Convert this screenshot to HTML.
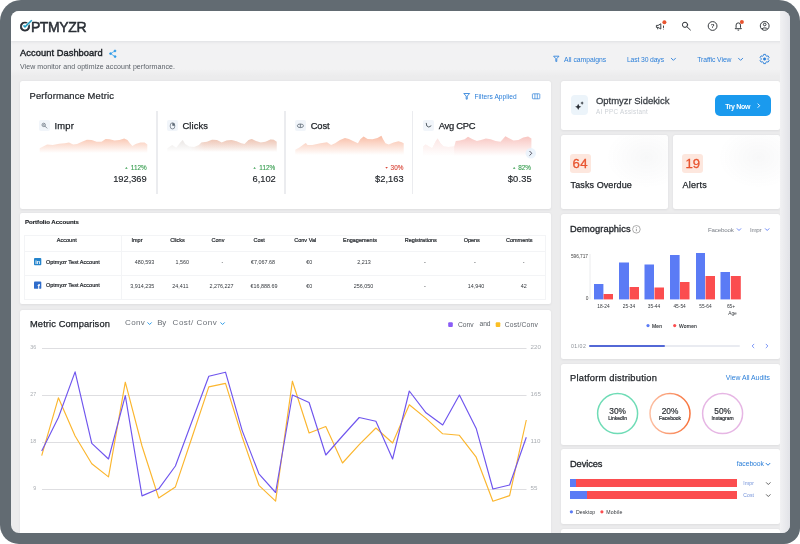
<!DOCTYPE html>
<html lang="en"><head><meta charset="utf-8"><title>Optmyzr Account Dashboard</title>
<style>
html,body{margin:0;padding:0;background:#fff;}
body{width:800px;height:544px;overflow:hidden;position:relative;font-family:"Liberation Sans",sans-serif;}
.frame{position:absolute;left:0;top:0;width:800px;height:544px;background:#626b72;border-radius:21px 21px 16px 19px;}
.screen{position:absolute;left:11px;top:10.5px;width:778.5px;height:522.5px;background:#ececed;border-radius:8px;overflow:hidden;}
.pg{position:absolute;left:-11px;top:-10.5px;width:800px;height:544px;filter:blur(0.4px);}
.c{position:absolute;background:#fff;border-radius:2.5px;box-shadow:0 0.5px 2.5px rgba(40,40,50,0.07);}
.b{position:absolute;}
.t{position:absolute;white-space:nowrap;line-height:1;}
svg{position:absolute;left:0;top:0;overflow:visible;}
</style></head><body>
<div class="frame"></div>
<div class="screen"><div class="pg">
<div class="b" style="left:11px;top:41px;width:778.5px;height:35px;background:linear-gradient(180deg,#f2f2f3 0%,#f2f2f3 80%,#ececed 100%);"></div>
<div class="b" style="left:11px;top:10.5px;width:778.5px;height:30.5px;background:#fff;box-shadow:0 1px 3px rgba(60,70,90,0.10);"></div>
<div class="c" style="left:20px;top:81px;width:531px;height:128px;"></div>
<div class="c" style="left:20px;top:213px;width:531px;height:91px;border-radius:2px;"></div>
<div class="c" style="left:20px;top:309.5px;width:531px;height:235.5px;"></div>
<div class="c" style="left:561px;top:81px;width:219px;height:49px;"></div>
<div class="c" style="left:561px;top:134.5px;width:106.5px;height:74.5px;background:radial-gradient(ellipse 38% 42% at 80% 30%,rgba(40,50,70,0.035),rgba(40,50,70,0) 100%),#fff;"></div>
<div class="c" style="left:673px;top:134.5px;width:107px;height:74.5px;background:radial-gradient(ellipse 38% 42% at 80% 30%,rgba(40,50,70,0.035),rgba(40,50,70,0) 100%),#fff;"></div>
<div class="c" style="left:561px;top:213.5px;width:219px;height:145.5px;"></div>
<div class="c" style="left:561px;top:364px;width:219px;height:80.5px;"></div>
<div class="c" style="left:561px;top:449px;width:219px;height:75px;"></div>
<div class="c" style="left:561px;top:528.5px;width:219px;height:16.5px;"></div>
<div class="b" style="left:780px;top:10.5px;width:9.5px;height:522.5px;background:linear-gradient(90deg,#f1f1f3,#e2e3e8);"></div>
<div class="b" style="left:156.4px;top:111px;width:1.2px;height:83px;background:#ebecef;"></div>
<div class="b" style="left:284.4px;top:111px;width:1.2px;height:83px;background:#ebecef;"></div>
<div class="b" style="left:411.9px;top:111px;width:1.2px;height:83px;background:#ebecef;"></div>
<div class="b" style="left:38.5px;top:119.6px;width:11.8px;height:11.0px;background:#f1f5fa;border-radius:2px;"></div>
<div class="b" style="left:166.5px;top:119.6px;width:11.8px;height:11.0px;background:#f1f5fa;border-radius:2px;"></div>
<div class="b" style="left:294.5px;top:119.6px;width:11.8px;height:11.0px;background:#f1f5fa;border-radius:2px;"></div>
<div class="b" style="left:422.5px;top:119.6px;width:11.8px;height:11.0px;background:#f1f5fa;border-radius:2px;"></div>
<div class="b" style="left:570.6px;top:94.8px;width:17.6px;height:20.4px;background:#ecf4fa;border-radius:4px;"></div>
<div class="b" style="left:715.1px;top:95.2px;width:55.5px;height:20.7px;background:#1a9aee;border-radius:5px;"></div>
<div class="b" style="left:570px;top:153.6px;width:20.6px;height:19.4px;background:#fde7de;border-radius:3px;"></div>
<div class="b" style="left:682.4px;top:153.6px;width:20.6px;height:19.4px;background:#fde7de;border-radius:3px;"></div>
<div class="b" style="left:24px;top:234.5px;width:522px;height:0.8px;background:#f3f4f6;"></div>
<div class="b" style="left:24px;top:250.5px;width:522px;height:0.8px;background:#f3f4f6;"></div>
<div class="b" style="left:24px;top:274.6px;width:522px;height:0.8px;background:#f3f4f6;"></div>
<div class="b" style="left:24px;top:298.9px;width:522px;height:0.8px;background:#f3f4f6;"></div>
<div class="b" style="left:24px;top:234.5px;width:0.8px;height:65.2px;background:#f3f4f6;"></div>
<div class="b" style="left:545.2px;top:234.5px;width:0.8px;height:65.2px;background:#f3f4f6;"></div>
<div class="b" style="left:121px;top:234.5px;width:0.8px;height:65.2px;background:#f3f4f6;"></div>
<div class="b" style="left:570px;top:479.2px;width:166.7px;height:8.1px;background:#fb4d4f;"></div>
<div class="b" style="left:570px;top:479.2px;width:6px;height:8.1px;background:#5b7bf5;"></div>
<div class="b" style="left:570px;top:491.3px;width:166.7px;height:7.9px;background:#fb4d4f;"></div>
<div class="b" style="left:570px;top:491.3px;width:16.6px;height:7.9px;background:#5b7bf5;"></div>
<div class="b" style="left:589px;top:345.4px;width:151px;height:1.2px;background:#e9ebf1;border-radius:1px;"></div>
<div class="b" style="left:589px;top:345.3px;width:75.6px;height:1.4px;background:#5368d6;border-radius:1px;"></div>
<svg width="800" height="544" viewBox="0 0 800 544">
<defs>
<linearGradient id="g1" gradientUnits="userSpaceOnUse" x1="0" y1="137" x2="0" y2="153"><stop offset="0" stop-color="#f7a888" stop-opacity="0.7"/><stop offset="1" stop-color="#f7a888" stop-opacity="0"/></linearGradient>
<linearGradient id="g2" gradientUnits="userSpaceOnUse" x1="0" y1="138" x2="0" y2="152"><stop offset="0" stop-color="#f7a888" stop-opacity="0.55"/><stop offset="1" stop-color="#f7a888" stop-opacity="0"/></linearGradient>
<linearGradient id="g2b" gradientUnits="userSpaceOnUse" x1="0" y1="138" x2="0" y2="152"><stop offset="0" stop-color="#dcd6d3" stop-opacity="0.7"/><stop offset="1" stop-color="#dcd6d3" stop-opacity="0"/></linearGradient>
<linearGradient id="g3" gradientUnits="userSpaceOnUse" x1="0" y1="134" x2="0" y2="155"><stop offset="0" stop-color="#f7a383" stop-opacity="0.8"/><stop offset="1" stop-color="#f7a383" stop-opacity="0"/></linearGradient>
<linearGradient id="g4" gradientUnits="userSpaceOnUse" x1="0" y1="134" x2="0" y2="156"><stop offset="0" stop-color="#f5a9a2" stop-opacity="0.75"/><stop offset="1" stop-color="#f5a9a2" stop-opacity="0"/></linearGradient>
<linearGradient id="gh2" gradientUnits="userSpaceOnUse" x1="167" y1="0" x2="277" y2="0"><stop offset="0" stop-color="#fff" stop-opacity="1"/><stop offset="0.28" stop-color="#fff" stop-opacity="1"/><stop offset="0.34" stop-color="#fff" stop-opacity="0"/></linearGradient>
<linearGradient id="gh4" gradientUnits="userSpaceOnUse" x1="423" y1="0" x2="532" y2="0"><stop offset="0" stop-color="#fff" stop-opacity="0.55"/><stop offset="0.28" stop-color="#fff" stop-opacity="0.5"/><stop offset="0.32" stop-color="#fff" stop-opacity="0"/></linearGradient>
<linearGradient id="gorange" x1="0" y1="0" x2="1" y2="0"><stop offset="0" stop-color="#fcc0a4"/><stop offset="1" stop-color="#f8733c"/></linearGradient>
<linearGradient id="gm2" gradientUnits="userSpaceOnUse" x1="190" y1="0" x2="204" y2="0"><stop offset="0" stop-color="#fff" stop-opacity="0"/><stop offset="1" stop-color="#fff" stop-opacity="1"/></linearGradient><mask id="m2" maskUnits="userSpaceOnUse" x="160" y="130" width="130" height="30"><rect x="160" y="130" width="130" height="30" fill="url(#gm2)"/></mask>
</defs>
<path d="M39.7 153.0 L39.7 148.2 L47.1 144.4 L52.7 144.9 L59.2 143.8 L64.9 143.3 L69.0 142.5 L73.1 144.4 L77.1 144.1 L82.0 141.7 L86.9 139.7 L91.7 140.1 L96.6 141.7 L101.5 141.7 L105.6 138.9 L109.6 139.2 L114.5 140.5 L119.4 140.1 L124.2 138.4 L127.5 140.1 L129.9 143.3 L132.4 146.1 L135.6 144.1 L140.5 142.5 L144.6 142.5 L147.3 144.4 L147.3 153.0 Z" fill="url(#g1)"/>
<path d="M167.3 152.0 L167.3 148.2 L172.2 144.9 L176.2 147.7 L180.3 142.5 L182.7 140.1 L185.2 144.1 L189.2 146.6 L194.1 147.0 L199.0 144.9 L201.4 142.5 L207.1 141.7 L212.0 139.7 L216.9 140.1 L221.7 142.5 L226.6 140.5 L231.5 140.1 L236.4 141.2 L241.2 143.3 L244.5 144.1 L248.6 140.1 L251.8 138.9 L255.9 140.9 L260.7 142.5 L265.6 141.7 L270.5 139.6 L273.7 139.7 L276.7 141.7 L276.7 152.0 Z" fill="url(#g2b)"/>
<g mask="url(#m2)"><path d="M167.3 152.0 L167.3 148.2 L172.2 144.9 L176.2 147.7 L180.3 142.5 L182.7 140.1 L185.2 144.1 L189.2 146.6 L194.1 147.0 L199.0 144.9 L201.4 142.5 L207.1 141.7 L212.0 139.7 L216.9 140.1 L221.7 142.5 L226.6 140.5 L231.5 140.1 L236.4 141.2 L241.2 143.3 L244.5 144.1 L248.6 140.1 L251.8 138.9 L255.9 140.9 L260.7 142.5 L265.6 141.7 L270.5 139.6 L273.7 139.7 L276.7 141.7 L276.7 152.0 Z" fill="url(#g2)"/>
</g>
<path d="M295.3 155.0 L295.3 149.8 L299.4 147.4 L304.2 144.1 L305.9 143.0 L307.5 144.9 L312.4 144.9 L320.5 143.3 L327.0 142.2 L331.1 144.9 L335.1 143.3 L340.0 140.1 L344.9 137.9 L348.9 138.9 L353.0 140.9 L357.9 143.3 L360.3 139.2 L363.6 136.5 L367.6 138.9 L372.5 139.2 L377.4 137.9 L381.4 135.7 L383.1 139.2 L385.5 143.3 L388.7 144.4 L393.6 142.5 L398.5 141.2 L401.7 142.2 L403.7 143.3 L403.7 155.0 Z" fill="url(#g3)"/>
<path d="M423.3 156.0 L423.3 146.6 L425.7 144.4 L429.0 146.6 L432.2 148.2 L435.5 141.7 L437.6 138.4 L440.4 143.3 L443.6 146.6 L448.5 147.0 L454.2 146.6 L455.8 140.9 L459.9 140.5 L464.7 139.2 L468.0 136.8 L472.1 138.9 L476.9 140.9 L481.0 140.1 L485.9 138.4 L490.7 139.2 L495.6 140.9 L500.5 141.7 L505.4 136.3 L508.6 137.9 L513.5 140.5 L518.4 140.1 L523.2 137.6 L528.1 136.5 L531.4 138.4 L531.4 156.0 Z" fill="url(#g4)"/>
<path d="M423.3 156.0 L423.3 146.6 L425.7 144.4 L429.0 146.6 L432.2 148.2 L435.5 141.7 L437.6 138.4 L440.4 143.3 L443.6 146.6 L448.5 147.0 L454.2 146.6 L454.2 156.0 Z" fill="url(#gh4)"/>
<line x1="42" x2="526.5" y1="348.5" y2="348.5" stroke="#dedee1" stroke-width="1.2"/>
<line x1="42" x2="526.5" y1="395.5" y2="395.5" stroke="#dedee1" stroke-width="1.2"/>
<line x1="42" x2="526.5" y1="442.5" y2="442.5" stroke="#dedee1" stroke-width="1.2"/>
<line x1="42" x2="526.5" y1="489.5" y2="489.5" stroke="#dedee1" stroke-width="1.2"/>
<polyline fill="none" stroke="#fbb62e" stroke-width="1.15" stroke-linejoin="round" points="41.7,455.6 58.4,397.8 75.1,436.0 91.8,463.8 108.5,476.9 125.3,382.2 142.0,446.0 158.7,498.0 175.4,486.9 192.1,437.0 208.8,386.9 225.5,383.4 242.2,437.0 258.9,485.3 275.6,501.2 292.4,381.2 309.1,433.0 325.8,426.5 342.5,463.0 359.2,444.7 375.9,428.0 392.6,443.0 409.3,404.7 426.0,418.4 442.7,433.8 459.4,435.3 476.2,457.2 492.9,501.2 509.6,495.6 526.3,420.0"/>
<polyline fill="none" stroke="#6f55ee" stroke-width="1.15" stroke-linejoin="round" points="41.7,450.9 58.4,417.5 75.1,371.9 91.8,443.4 108.5,459.0 125.3,395.6 142.0,495.9 158.7,488.8 175.4,466.0 192.1,421.0 208.8,376.2 225.5,372.2 242.2,430.6 258.9,473.8 275.6,492.5 292.4,395.0 309.1,402.5 325.8,455.0 342.5,436.0 359.2,417.5 375.9,421.2 392.6,459.0 409.3,391.0 426.0,412.8 442.7,425.0 459.4,395.0 476.2,428.4 492.9,489.0 509.6,485.0 526.3,437.2"/>
<rect x="448.2" y="322.3" width="4.6" height="4.6" rx="1" fill="#8a5cf6"/>
<rect x="495.7" y="322.3" width="4.6" height="4.6" rx="1" fill="#fbbf24"/>
<line x1="590" x2="590" y1="254" y2="299.4" stroke="#e6e7ea" stroke-width="0.8"/>
<rect x="594" y="284" width="9.4" height="15.4" fill="#5b7bf5"/>
<rect x="603.6" y="294" width="9.4" height="5.4" fill="#fb4d4f"/>
<rect x="619" y="262.5" width="10" height="36.9" fill="#5b7bf5"/>
<rect x="629.6" y="287" width="9.4" height="12.4" fill="#fb4d4f"/>
<rect x="644.5" y="264.5" width="9.5" height="34.9" fill="#5b7bf5"/>
<rect x="654.5" y="287.5" width="9.5" height="11.9" fill="#fb4d4f"/>
<rect x="670" y="255" width="9.6" height="44.4" fill="#5b7bf5"/>
<rect x="680" y="282" width="9.5" height="17.4" fill="#fb4d4f"/>
<rect x="696" y="253" width="9" height="46.4" fill="#5b7bf5"/>
<rect x="705.5" y="276" width="9.5" height="23.4" fill="#fb4d4f"/>
<rect x="720.5" y="272" width="9.5" height="27.4" fill="#5b7bf5"/>
<rect x="730.8" y="276" width="10.0" height="23.4" fill="#fb4d4f"/>
<circle cx="648" cy="325.6" r="1.6" fill="#5b7bf5"/><circle cx="674.7" cy="325.6" r="1.6" fill="#fb4d4f"/>
<circle cx="571.4" cy="511.8" r="1.6" fill="#5b7bf5"/><circle cx="601.9" cy="511.8" r="1.6" fill="#fb4d4f"/>
<circle cx="617.6" cy="413.6" r="20" fill="none" stroke="#6fdcb6" stroke-width="1.5"/>
<circle cx="670" cy="413.6" r="20" fill="none" stroke="url(#gorange)" stroke-width="1.5"/>
<circle cx="722.6" cy="413.6" r="20" fill="none" stroke="#e6b6e4" stroke-width="1.5"/>
<path d="M671.30 58.25 L673.40 60.35 L675.50 58.25" fill="none" stroke="#2b7fd9" stroke-width="0.9" stroke-linecap="round" stroke-linejoin="round"/>
<path d="M738.50 58.25 L740.60 60.35 L742.70 58.25" fill="none" stroke="#2b7fd9" stroke-width="0.9" stroke-linecap="round" stroke-linejoin="round"/>
<path d="M147.80 322.70 L149.60 324.50 L151.40 322.70" fill="none" stroke="#2b9be8" stroke-width="1" stroke-linecap="round" stroke-linejoin="round"/>
<path d="M220.80 322.70 L222.60 324.50 L224.40 322.70" fill="none" stroke="#2b9be8" stroke-width="1" stroke-linecap="round" stroke-linejoin="round"/>
<path d="M737.20 228.70 L739.00 230.50 L740.80 228.70" fill="none" stroke="#5b7bf5" stroke-width="0.9" stroke-linecap="round" stroke-linejoin="round"/>
<path d="M765.40 228.70 L767.20 230.50 L769.00 228.70" fill="none" stroke="#5b7bf5" stroke-width="0.9" stroke-linecap="round" stroke-linejoin="round"/>
<path d="M766.10 463.35 L768.00 465.25 L769.90 463.35" fill="none" stroke="#2b7fd9" stroke-width="1" stroke-linecap="round" stroke-linejoin="round"/>
<path d="M766.40 482.65 L768.30 484.55 L770.20 482.65" fill="none" stroke="#555" stroke-width="0.9" stroke-linecap="round" stroke-linejoin="round"/>
<path d="M766.40 494.65 L768.30 496.55 L770.20 494.65" fill="none" stroke="#555" stroke-width="0.9" stroke-linecap="round" stroke-linejoin="round"/>
<path d="M753.90 344.20 L752.10 346.00 L753.90 347.80" fill="none" stroke="#5b7bf5" stroke-width="0.8" stroke-linecap="round" stroke-linejoin="round"/>
<path d="M766.10 344.20 L767.90 346.00 L766.10 347.80" fill="none" stroke="#5b7bf5" stroke-width="0.8" stroke-linecap="round" stroke-linejoin="round"/>
<path d="M757.90 103.90 L759.70 105.70 L757.90 107.50" fill="none" stroke="#fff" stroke-width="0.9" stroke-linecap="round" stroke-linejoin="round"/>
<circle cx="530.8" cy="153.3" r="5.2" fill="#e9f2fb" opacity="0.85"/>
<path d="M529.80 151.30 L531.80 153.30 L529.80 155.30" fill="none" stroke="#445" stroke-width="0.9" stroke-linecap="round" stroke-linejoin="round"/>
<g fill="#2b9be8" stroke="#2b9be8" stroke-width="0.7"><circle cx="115" cy="50.9" r="0.95"/><circle cx="110.5" cy="53.6" r="0.95"/><circle cx="115.1" cy="56.6" r="0.95"/><path d="M115 50.9 L110.5 53.6 L115.1 56.6" fill="none"/></g>
<g stroke="#2d3136" stroke-width="0.9" fill="none" stroke-linejoin="round"><path d="M656.4 25.4 h1.7 l2.7 -1.6 v5.2 l-2.7 -1.6 h-1.7 z"/><path d="M657.7 27.6 v1.7"/><path d="M663.5 25.6 v2.3 M663.5 28.8 v0.6"/></g><circle cx="664.4" cy="22.2" r="2" fill="#e8542f"/>
<g stroke="#2d3136" stroke-width="1" fill="none" stroke-linecap="round"><circle cx="685" cy="24.8" r="2.6"/><path d="M687 26.8 L690.4 30"/></g>
<circle cx="712.6" cy="26" r="4.4" fill="none" stroke="#2d3136" stroke-width="0.95"/><text x="712.6" y="28.2" font-size="6.2" font-weight="700" text-anchor="middle" fill="#2d3136" font-family="Liberation Sans, sans-serif">?</text>
<g stroke="#2d3136" stroke-width="0.95" fill="none" stroke-linejoin="round"><path d="M735.2 28.7 h6.2 l-0.9 -1.2 v-2.4 a2.2 2.2 0 0 0 -4.4 0 v2.4 z"/><path d="M737.6 30.1 h1.5"/></g><circle cx="741.9" cy="22.1" r="2" fill="#e8542f"/>
<g stroke="#2d3136" stroke-width="0.95" fill="none"><circle cx="764.7" cy="25.9" r="4.4"/><circle cx="764.7" cy="24.5" r="1.3"/><path d="M761.9 29 a3.2 2.2 0 0 1 5.6 0"/></g>
<path d="M553.6 56.2 h5.4 l-2.21 2.43 v2.81 h-0.97 v-2.81 z" fill="none" stroke="#2b7fd9" stroke-width="0.85" stroke-linejoin="round"/>
<path d="M463.8 93.5 h5.8 l-2.38 2.61 v3.02 h-1.04 v-3.02 z" fill="none" stroke="#2b7fd9" stroke-width="0.85" stroke-linejoin="round"/>
<g fill="none" stroke="#2b7fd9" stroke-width="0.7"><rect x="532.4" y="93.8" width="7.4" height="5" rx="0.6"/><path d="M534.9 93.8 v5 M537.3 93.8 v5"/></g>
<path d="M765.95 62.20 L765.53 63.61 L763.67 63.61 L763.25 62.20 L762.50 61.77 L761.08 62.11 L760.14 60.49 L761.15 59.43 L761.15 58.57 L760.14 57.51 L761.08 55.89 L762.50 56.23 L763.25 55.80 L763.67 54.39 L765.53 54.39 L765.95 55.80 L766.70 56.23 L768.12 55.89 L769.06 57.51 L768.05 58.57 L768.05 59.43 L769.06 60.49 L768.12 62.11 L766.70 61.77 Z" fill="none" stroke="#2b7fd9" stroke-width="0.95" stroke-linejoin="round"/><circle cx="764.6" cy="59" r="1.27" fill="#2b7fd9" stroke="#2b7fd9" stroke-width="0.5"/>
<g stroke="#5d6975" stroke-width="0.7" fill="none"><circle cx="43.7" cy="124.9" r="1.7"/><path d="M45 126.2 L46.9 128.1" stroke-linecap="round"/><path d="M42.9 124.9 h1.6 M43.7 124.1 v1.6" stroke-width="0.45"/></g>
<g stroke="#5d6975" stroke-width="0.7" fill="none"><rect x="170.3" y="122.9" width="4.4" height="6" rx="2.1"/><path d="M172.5 122.9 v2.6 h2.2" stroke-width="0.5"/><path d="M172.6 123 a2.1 2.1 0 0 1 2.1 2.4 h-2.1 z" fill="#5d6975" stroke="none"/></g>
<g stroke="#5d6975" stroke-width="0.8" fill="none"><ellipse cx="300.4" cy="125.8" rx="3.1" ry="1.8"/><path d="M300.4 124 v3.6"/></g>
<g stroke="#3d4852" stroke-width="0.85" fill="none" stroke-linecap="round" stroke-linejoin="round"><path d="M426.3 123.3 L426.8 126 Q428.6 128.3 431 126"/></g>
<path d="M125.10000000000001 168.70000000000002 L126.4 166.9 L127.7 168.70000000000002 Z" fill="#3a9f52"/>
<path d="M253.29999999999998 168.70000000000002 L254.6 166.9 L255.9 168.70000000000002 Z" fill="#3a9f52"/>
<path d="M385.3 166.9 L386.6 168.70000000000002 L387.90000000000003 166.9 Z" fill="#d9483b"/>
<path d="M512.9000000000001 168.70000000000002 L514.2 166.9 L515.5 168.70000000000002 Z" fill="#3a9f52"/>
<path d="M578.2 103.7 Q578.634 106.366 581.3000000000001 106.8 Q578.634 107.234 578.2 109.89999999999999 Q577.7660000000001 107.234 575.1 106.8 Q577.7660000000001 106.366 578.2 103.7 Z" fill="#2a2f36"/>
<path d="M582.1 101.3 Q582.352 102.848 583.9 103.1 Q582.352 103.35199999999999 582.1 104.89999999999999 Q581.8480000000001 103.35199999999999 580.3000000000001 103.1 Q581.8480000000001 102.848 582.1 101.3 Z" fill="#2a2f36"/>
<circle cx="636.4" cy="229.3" r="3.8" fill="none" stroke="#777" stroke-width="0.6"/><path d="M636.4 228.8 v2.4 M636.4 227.2 v0.7" stroke="#777" stroke-width="0.7"/>
<rect x="34" y="258" width="7.3" height="7.2" rx="0.9" fill="#2584cc"/><text x="37.7" y="264" font-size="5.6" font-weight="700" text-anchor="middle" fill="#fff" font-family="Liberation Sans, sans-serif">in</text>
<rect x="34" y="281.6" width="7.3" height="7.2" rx="0.9" fill="#2f6ccb"/><text x="38.8" y="288.7" font-size="7.4" font-weight="700" text-anchor="middle" fill="#fff" font-family="Liberation Sans, sans-serif">f</text>
</svg>

<div class="t" style="left:19.75px;top:20.12px;font-size:13.5px;color:#2a2f36;-webkit-text-stroke:0.75px #2a2f36;">O</div>
<div class="t" style="left:30.90px;top:19.65px;font-size:14px;color:#2a2f36;letter-spacing:-0.375px;-webkit-text-stroke:0.5px #2a2f36;">PTMYZR</div>
<div class="t" style="left:20.00px;top:49.43px;font-size:9.3px;color:#1d2126;letter-spacing:0.062px;-webkit-text-stroke:0.4px #1d2126;">Account Dashboard</div>
<div class="t" style="left:20.00px;top:62.57px;font-size:7px;color:#5b6168;letter-spacing:0.074px;">View monitor and optimize account performance.</div>
<div class="t" style="left:564.00px;top:56.54px;font-size:6.8px;color:#2b7fd9;letter-spacing:-0.005px;">All campaigns</div>
<div class="t" style="left:626.90px;top:56.54px;font-size:6.8px;color:#2b7fd9;letter-spacing:-0.126px;">Last 30 days</div>
<div class="t" style="left:697.20px;top:56.54px;font-size:6.8px;color:#2b7fd9;letter-spacing:-0.062px;">Traffic View</div>
<div class="t" style="left:29.50px;top:90.79px;font-size:9.4px;color:#22262b;letter-spacing:0.154px;-webkit-text-stroke:0.2px #22262b;">Performance Metric</div>
<div class="t" style="left:474.50px;top:93.91px;font-size:6.6px;color:#2b7fd9;letter-spacing:0.061px;">Filters Applied</div>
<div class="t" style="left:54.50px;top:120.64px;font-size:9.4px;color:#1d2126;letter-spacing:0.214px;-webkit-text-stroke:0.25px #1d2126;">Impr</div>
<div class="t" style="left:182.50px;top:120.64px;font-size:9.4px;color:#1d2126;letter-spacing:0.091px;-webkit-text-stroke:0.25px #1d2126;">Clicks</div>
<div class="t" style="left:310.75px;top:120.64px;font-size:9.4px;color:#1d2126;letter-spacing:-0.152px;-webkit-text-stroke:0.25px #1d2126;">Cost</div>
<div class="t" style="left:438.75px;top:120.64px;font-size:9.4px;color:#1d2126;letter-spacing:-0.283px;-webkit-text-stroke:0.25px #1d2126;">Avg CPC</div>
<div class="t" style="left:130.82px;top:164.58px;font-size:6.4px;color:#3a9f52;-webkit-text-stroke:0.12px #3a9f52;">112%</div>
<div class="t" style="left:259.32px;top:164.58px;font-size:6.4px;color:#3a9f52;-webkit-text-stroke:0.12px #3a9f52;">112%</div>
<div class="t" style="left:390.60px;top:164.58px;font-size:6.4px;color:#d9483b;-webkit-text-stroke:0.12px #d9483b;">30%</div>
<div class="t" style="left:518.20px;top:164.58px;font-size:6.4px;color:#3a9f52;-webkit-text-stroke:0.12px #3a9f52;">82%</div>
<div class="t" style="left:113.20px;top:175.13px;font-size:9.3px;color:#22262b;letter-spacing:-0.017px;-webkit-text-stroke:0.15px #22262b;">192,369</div>
<div class="t" style="left:252.50px;top:175.13px;font-size:9.3px;color:#22262b;-webkit-text-stroke:0.15px #22262b;">6,102</div>
<div class="t" style="left:375.00px;top:175.13px;font-size:9.3px;color:#22262b;letter-spacing:0.048px;-webkit-text-stroke:0.15px #22262b;">$2,163</div>
<div class="t" style="left:507.80px;top:175.13px;font-size:9.3px;color:#22262b;letter-spacing:0.141px;-webkit-text-stroke:0.15px #22262b;">$0.35</div>
<div class="t" style="left:25.00px;top:219.14px;font-size:6.1px;color:#15181c;font-weight:700;letter-spacing:-0.016px;-webkit-text-stroke:0.12px #15181c;">Portfolio Accounts</div>
<div class="t" style="left:56.86px;top:238.04px;font-size:5.5px;color:#22262b;-webkit-text-stroke:0.2px #22262b;">Account</div>
<div class="t" style="left:131.50px;top:238.04px;font-size:5.5px;color:#22262b;-webkit-text-stroke:0.2px #22262b;">Impr</div>
<div class="t" style="left:170.16px;top:238.04px;font-size:5.5px;color:#22262b;-webkit-text-stroke:0.2px #22262b;">Clicks</div>
<div class="t" style="left:211.58px;top:238.04px;font-size:5.5px;color:#22262b;-webkit-text-stroke:0.2px #22262b;">Conv</div>
<div class="t" style="left:253.59px;top:238.04px;font-size:5.5px;color:#22262b;-webkit-text-stroke:0.2px #22262b;">Cost</div>
<div class="t" style="left:294.29px;top:238.04px;font-size:5.5px;color:#22262b;-webkit-text-stroke:0.2px #22262b;">Conv Val</div>
<div class="t" style="left:343.02px;top:238.04px;font-size:5.5px;color:#22262b;-webkit-text-stroke:0.2px #22262b;">Engagements</div>
<div class="t" style="left:404.70px;top:238.04px;font-size:5.5px;color:#22262b;-webkit-text-stroke:0.2px #22262b;">Registrations</div>
<div class="t" style="left:463.64px;top:238.04px;font-size:5.5px;color:#22262b;-webkit-text-stroke:0.2px #22262b;">Opens</div>
<div class="t" style="left:505.95px;top:238.04px;font-size:5.5px;color:#22262b;-webkit-text-stroke:0.2px #22262b;">Comments</div>
<div class="t" style="left:45.90px;top:260.24px;font-size:5.5px;color:#1d2126;letter-spacing:0.030px;-webkit-text-stroke:0.2px #1d2126;">Optmyzr Test Account</div>
<div class="t" style="left:45.90px;top:283.44px;font-size:5.5px;color:#1d2126;letter-spacing:0.030px;-webkit-text-stroke:0.2px #1d2126;">Optmyzr Test Account</div>
<div class="t" style="left:134.75px;top:260.23px;font-size:5.4px;color:#33373c;">480,593</div>
<div class="t" style="left:175.45px;top:260.23px;font-size:5.4px;color:#33373c;">1,560</div>
<div class="t" style="left:221.60px;top:260.23px;font-size:5.4px;color:#33373c;">-</div>
<div class="t" style="left:251.11px;top:260.23px;font-size:5.4px;color:#33373c;">€7,067.68</div>
<div class="t" style="left:306.20px;top:260.23px;font-size:5.4px;color:#33373c;">€0</div>
<div class="t" style="left:357.25px;top:260.23px;font-size:5.4px;color:#33373c;">2,213</div>
<div class="t" style="left:424.10px;top:260.23px;font-size:5.4px;color:#33373c;">-</div>
<div class="t" style="left:474.10px;top:260.23px;font-size:5.4px;color:#33373c;">-</div>
<div class="t" style="left:522.85px;top:260.23px;font-size:5.4px;color:#33373c;">-</div>
<div class="t" style="left:130.31px;top:284.23px;font-size:5.4px;color:#33373c;">3,914,235</div>
<div class="t" style="left:172.35px;top:284.23px;font-size:5.4px;color:#33373c;">24,411</div>
<div class="t" style="left:209.61px;top:284.23px;font-size:5.4px;color:#33373c;">2,276,227</div>
<div class="t" style="left:250.41px;top:284.23px;font-size:5.4px;color:#33373c;">€16,888.69</div>
<div class="t" style="left:306.20px;top:284.23px;font-size:5.4px;color:#33373c;">€0</div>
<div class="t" style="left:353.65px;top:284.23px;font-size:5.4px;color:#33373c;">256,050</div>
<div class="t" style="left:424.10px;top:284.23px;font-size:5.4px;color:#33373c;">-</div>
<div class="t" style="left:467.65px;top:284.23px;font-size:5.4px;color:#33373c;">14,940</div>
<div class="t" style="left:520.75px;top:284.23px;font-size:5.4px;color:#33373c;">42</div>
<div class="t" style="left:30.00px;top:319.53px;font-size:9.3px;color:#1d2126;letter-spacing:0.114px;-webkit-text-stroke:0.25px #1d2126;">Metric Comparison</div>
<div class="t" style="left:125.00px;top:319.23px;font-size:8px;color:#6a6f76;letter-spacing:0.375px;">Conv</div>
<div class="t" style="left:157.30px;top:319.23px;font-size:8px;color:#6a6f76;letter-spacing:-0.429px;">By</div>
<div class="t" style="left:172.60px;top:319.23px;font-size:8px;color:#6a6f76;letter-spacing:0.508px;">Cost/ Conv</div>
<div class="t" style="left:458.00px;top:321.93px;font-size:6.7px;color:#5a5f66;letter-spacing:-0.036px;">Conv</div>
<div class="t" style="left:479.60px;top:321.23px;font-size:6.7px;color:#5a5f66;letter-spacing:-0.149px;">and</div>
<div class="t" style="left:504.75px;top:321.93px;font-size:6.7px;color:#5a5f66;letter-spacing:0.237px;">Cost/Conv</div>
<div class="t" style="left:30.29px;top:344.91px;font-size:5.3px;color:#a9adb2;">36</div>
<div class="t" style="left:30.29px;top:391.91px;font-size:5.3px;color:#a9adb2;">27</div>
<div class="t" style="left:30.29px;top:438.91px;font-size:5.3px;color:#a9adb2;">18</div>
<div class="t" style="left:33.25px;top:485.91px;font-size:5.3px;color:#a9adb2;">9</div>
<div class="t" style="left:530.60px;top:343.85px;font-size:6.2px;color:#a9adb2;">220</div>
<div class="t" style="left:530.60px;top:390.85px;font-size:6.2px;color:#a9adb2;">165</div>
<div class="t" style="left:530.60px;top:437.85px;font-size:6.2px;color:#a9adb2;">110</div>
<div class="t" style="left:530.60px;top:484.85px;font-size:6.2px;color:#a9adb2;">55</div>
<div class="t" style="left:596.00px;top:96.26px;font-size:9.5px;color:#3c4147;letter-spacing:-0.033px;-webkit-text-stroke:0.28px #3c4147;">Optmyzr Sidekick</div>
<div class="t" style="left:596.00px;top:108.57px;font-size:6.3px;color:#cdd1d6;letter-spacing:0.283px;">AI PPC Assistant</div>
<div class="t" style="left:725.20px;top:102.77px;font-size:7px;color:#ffffff;font-weight:700;letter-spacing:-0.344px;">Try Now</div>
<div class="t" style="left:572.40px;top:156.93px;font-size:13.2px;color:#e8542f;letter-spacing:0.619px;-webkit-text-stroke:0.3px #e8542f;">64</div>
<div class="t" style="left:685.40px;top:156.93px;font-size:13.2px;color:#e8542f;letter-spacing:0.019px;-webkit-text-stroke:0.3px #e8542f;">19</div>
<div class="t" style="left:570.60px;top:180.58px;font-size:9px;color:#22262b;letter-spacing:0.093px;-webkit-text-stroke:0.25px #22262b;">Tasks Overdue</div>
<div class="t" style="left:682.40px;top:180.58px;font-size:9px;color:#22262b;letter-spacing:0.252px;-webkit-text-stroke:0.25px #22262b;">Alerts</div>
<div class="t" style="left:570.00px;top:224.63px;font-size:9.3px;color:#1d2126;letter-spacing:0.056px;-webkit-text-stroke:0.3px #1d2126;">Demographics</div>
<div class="t" style="left:708.00px;top:227.05px;font-size:6.2px;color:#7a7f87;letter-spacing:-0.185px;">Facebook</div>
<div class="t" style="left:750.00px;top:227.05px;font-size:6.2px;color:#7a7f87;letter-spacing:-0.279px;">Impr</div>
<div class="t" style="left:571.00px;top:254.54px;font-size:4.8px;color:#444;letter-spacing:-0.053px;">596,717</div>
<div class="t" style="left:585.83px;top:296.94px;font-size:4.8px;color:#444;">0</div>
<div class="t" style="left:597.36px;top:304.64px;font-size:4.8px;color:#33373c;">18-24</div>
<div class="t" style="left:622.86px;top:304.64px;font-size:4.8px;color:#33373c;">25-34</div>
<div class="t" style="left:647.86px;top:304.64px;font-size:4.8px;color:#33373c;">35-44</div>
<div class="t" style="left:673.46px;top:304.64px;font-size:4.8px;color:#33373c;">45-54</div>
<div class="t" style="left:699.36px;top:304.64px;font-size:4.8px;color:#33373c;">55-64</div>
<div class="t" style="left:726.93px;top:304.64px;font-size:4.8px;color:#33373c;">65+</div>
<div class="t" style="left:728.23px;top:311.74px;font-size:4.8px;color:#33373c;">Age</div>
<div class="t" style="left:652.00px;top:323.77px;font-size:5px;color:#2a2e33;letter-spacing:0.106px;-webkit-text-stroke:0.12px #2a2e33;">Men</div>
<div class="t" style="left:679.00px;top:323.77px;font-size:5px;color:#2a2e33;letter-spacing:0.191px;-webkit-text-stroke:0.12px #2a2e33;">Women</div>
<div class="t" style="left:571.00px;top:344.20px;font-size:5.2px;color:#8a8f96;letter-spacing:0.448px;">01/02</div>
<div class="t" style="left:570.00px;top:374.33px;font-size:9.3px;color:#1d2126;letter-spacing:0.236px;-webkit-text-stroke:0.25px #1d2126;">Platform distribution</div>
<div class="t" style="left:725.80px;top:375.14px;font-size:6.8px;color:#2b7fd9;letter-spacing:0.007px;">View All Audits</div>
<div class="t" style="left:609.30px;top:407.17px;font-size:8.3px;color:#2d3136;-webkit-text-stroke:0.2px #2d3136;">30%</div>
<div class="t" style="left:608.15px;top:415.97px;font-size:5.0px;color:#2d3136;-webkit-text-stroke:0.2px #2d3136;">LinkedIn</div>
<div class="t" style="left:661.70px;top:407.17px;font-size:8.3px;color:#2d3136;-webkit-text-stroke:0.2px #2d3136;">20%</div>
<div class="t" style="left:659.02px;top:415.97px;font-size:5.0px;color:#2d3136;-webkit-text-stroke:0.2px #2d3136;">Facebook</div>
<div class="t" style="left:714.30px;top:407.17px;font-size:8.3px;color:#2d3136;-webkit-text-stroke:0.2px #2d3136;">50%</div>
<div class="t" style="left:711.48px;top:415.97px;font-size:5.0px;color:#2d3136;-webkit-text-stroke:0.2px #2d3136;">Instagram</div>
<div class="t" style="left:570.00px;top:460.43px;font-size:9.3px;color:#1d2126;letter-spacing:-0.104px;-webkit-text-stroke:0.3px #1d2126;">Devices</div>
<div class="t" style="left:736.70px;top:461.44px;font-size:6.8px;color:#2b7fd9;letter-spacing:-0.039px;">facebook</div>
<div class="t" style="left:743.30px;top:480.77px;font-size:5px;color:#6f8fd8;letter-spacing:0.200px;">Impr</div>
<div class="t" style="left:743.30px;top:492.77px;font-size:5px;color:#6f8fd8;letter-spacing:0.120px;">Cost</div>
<div class="t" style="left:576.00px;top:509.80px;font-size:5.2px;color:#33373c;letter-spacing:0.034px;">Desktop</div>
<div class="t" style="left:606.20px;top:509.80px;font-size:5.2px;color:#33373c;letter-spacing:0.201px;">Mobile</div>
<svg width="800" height="544" viewBox="0 0 800 544"><path d="M23.3 25.2 L25 26.9 L31.9 20.1" fill="none" stroke="#fff" stroke-width="2.8"/><path d="M23.5 25.4 L25 26.9 L31.8 20.2" fill="none" stroke="#1f9fc4" stroke-width="1.5"/></svg>
</div></div>
</body></html>
